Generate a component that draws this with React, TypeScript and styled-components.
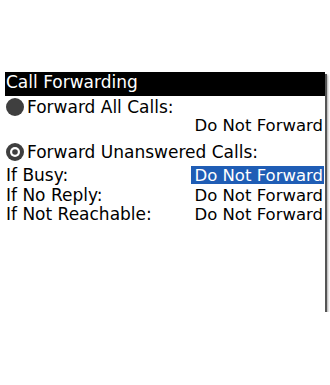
import styled, { createGlobalStyle } from "styled-components";

const Global = createGlobalStyle`
    html, body {
        margin: 0;
        padding: 0;
        background: #ffffff;
    }
    body {
        font-family: "DejaVu Sans", "Liberation Sans", sans-serif;
    }
`;

const Screen = styled.div`
    margin: 72px 0 0 5px;
    width: 320px;
    height: 240px;
    background: #ffffff;
    box-shadow: 2px 2px 0 #555555, 3px 3px 2px rgba(0, 0, 0, 0.35);
    display: flex;
    flex-direction: column;
    overflow: hidden;
`;

const TitleBar = styled.div`
    height: 24px;
    background: #000000;
    color: #ffffff;
    font-size: 17px;
    line-height: 20px;
    padding-left: 1px;
    box-sizing: border-box;
    white-space: nowrap;
`;

const OptionRow = styled.div<{ $top: number }>`
    display: flex;
    align-items: center;
    gap: 3px;
    height: 20px;
    margin-top: ${(p) => p.$top}px;
    padding-left: 1px;
    font-size: 17px;
    color: #000000;
    white-space: nowrap;
`;

const ValueLine = styled.div`
    display: flex;
    justify-content: flex-end;
    height: 20px;
    margin-top: -1px;
    padding-right: 2px;
    font-size: 16.5px;
    line-height: 20px;
    color: #000000;
`;

const Settings = styled.div`
    display: grid;
    grid-template-columns: 1fr auto;
    grid-auto-rows: 19.5px;
    margin-top: 4px;
    padding: 0 1px 0 1px;
    line-height: 19px;
    white-space: nowrap;
`;

const Label = styled.div`
    font-size: 17px;
    color: #000000;
`;

const Value = styled.div<{ $active?: boolean }>`
    font-size: 16.5px;
    color: ${(p) => (p.$active ? "#ffffff" : "#000000")};
    background: ${(p) => (p.$active ? "#1f5db5" : "transparent")};
    padding: 0 1px 0 3px;
    height: 18px;
`;

function Radio({ checked }: { checked?: boolean }) {
    return (
        <svg width="18" height="18" viewBox="0 0 18 18">
            <circle cx="9" cy="9" r="9" fill="#3f3f3f" />
            {checked && <circle cx="9" cy="9" r="5" fill="#ffffff" />}
            {checked && <circle cx="9" cy="9" r="2.8" fill="#3f3f3f" />}
        </svg>
    );
}

export default function App() {
    return (
        <>
            <Global />
            <Screen>
                <TitleBar>Call Forwarding</TitleBar>
                <OptionRow $top={1}>
                    <Radio />
                    <span>Forward All Calls:</span>
                </OptionRow>
                <ValueLine>Do Not Forward</ValueLine>
                <OptionRow $top={6}>
                    <Radio checked />
                    <span>Forward Unanswered Calls:</span>
                </OptionRow>
                <Settings>
                    <Label>If Busy:</Label>
                    <Value $active>Do Not Forward</Value>
                    <Label>If No Reply:</Label>
                    <Value>Do Not Forward</Value>
                    <Label>If Not Reachable:</Label>
                    <Value>Do Not Forward</Value>
                </Settings>
            </Screen>
        </>
    );
}
